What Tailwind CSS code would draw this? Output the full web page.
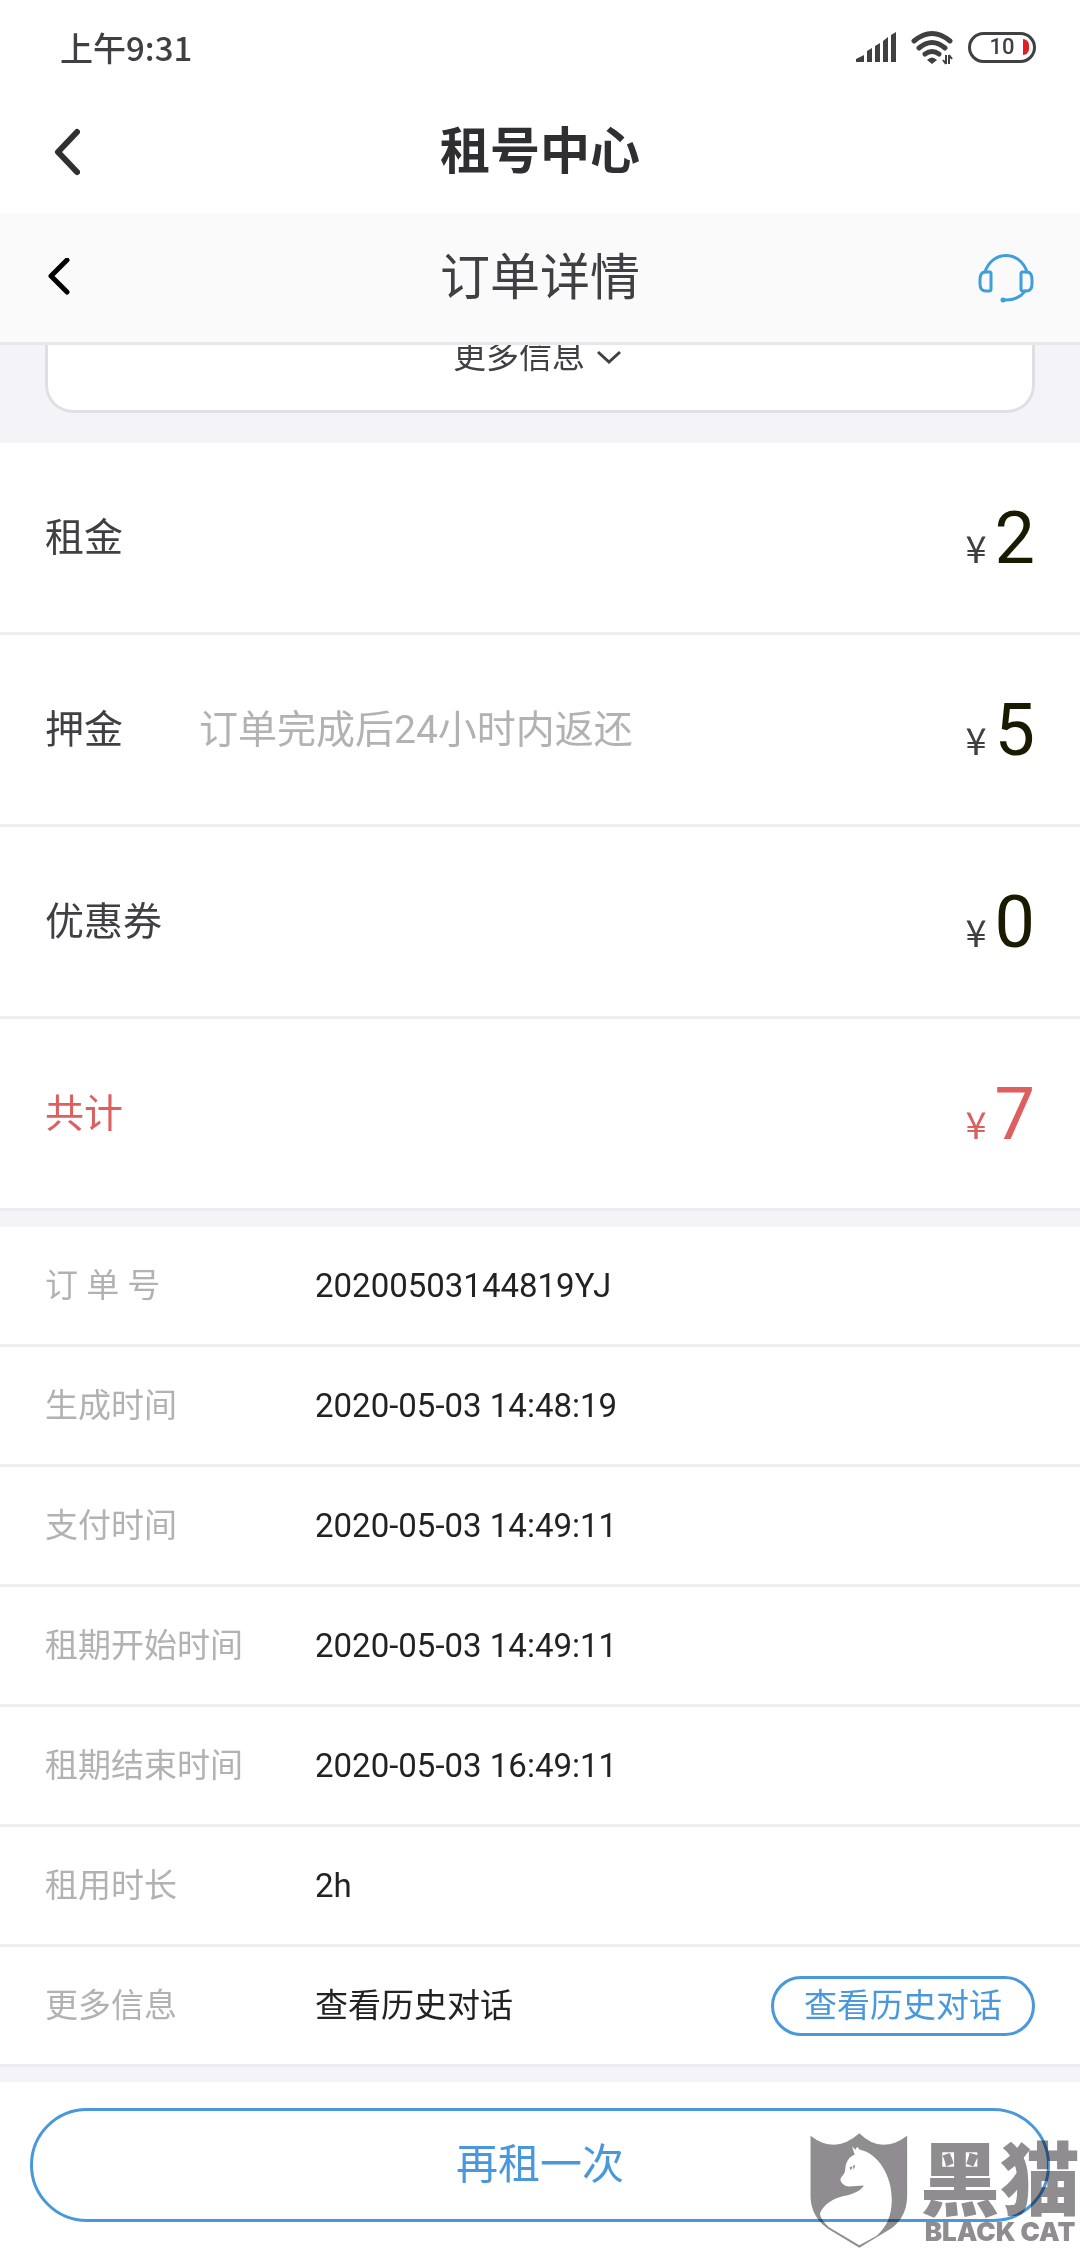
<!DOCTYPE html>
<html lang="zh-CN">

<head>
    <meta charset="UTF-8">
    <meta name="viewport" content="width=device-width, initial-scale=1">
    <title>订单详情</title>
    <script src="https://cdn.jsdelivr.net/npm/@tailwindcss/browser@4"></script>
</head>

<body class="bg-white text-[#404044] font-[Roboto,'Noto_Sans_CJK_SC',sans-serif]">
    <div class="relative flex flex-col min-h-screen overflow-hidden">
        <!-- Status bar -->
        <div class="flex items-center justify-between h-24 pl-15 pr-11 pb-0.5">
            <span class="text-[33px] leading-none font-medium font-['Noto_Sans_CJK_SC',sans-serif]">上午9:31</span>
            <div class="flex items-center gap-3">
                <svg class="w-10 h-8" viewBox="0 0 40 32" fill="#404040">
                    <path d="M0 31v-3l8-4v7zM11 31V20l5-3v14zM19 31V15l5-3v19zM27 31V10l5-4v25zM35 31V4l5-3v30z" />
                </svg>
                <svg class="w-12 h-9" viewBox="-2 0 48 36" fill="none" stroke="#404040" stroke-width="5" stroke-linecap="round">
                    <path d="M4 12Q22-3 40 12M9 19q13-11 26 0M15 25q7-5 14 0" />
                    <path d="M17 31q5-5 10 0l-5 4z" fill="#404040" stroke="none" />
                    <path d="M36 26v9M39 26v9M36 35l-3-4M39 26l3 4" stroke-width="2" stroke-linecap="butt" />
                </svg>
                <span class="relative flex items-center justify-center w-17 h-[31px] rounded-full border-3 border-[#404040] text-[22px] leading-none font-medium">
                    10
                    <i class="absolute right-[4px] w-[6px] h-4 rounded-r-full bg-[#e02020]"></i>
                </span>
            </div>
        </div>

        <!-- App title -->
        <header class="grid grid-cols-[1fr_auto_1fr] items-center h-[117px] px-13 pb-1.5">
            <button type="button" aria-label="返回" class="justify-self-start">
                <svg class="w-7 h-12" viewBox="0 0 28 48" fill="none" stroke="#303030" stroke-width="6" stroke-linecap="round" stroke-linejoin="round">
                    <path d="M25 4 6 24l19 20" />
                </svg>
            </button>
            <h1 class="text-[50px] leading-none font-bold text-[#2e2f31]">租号中心</h1>
        </header>

        <!-- Page title -->
        <header class="grid grid-cols-[1fr_auto_1fr] items-center h-33 px-[46px] bg-[#fafafa] border-b-3 border-[#e7e7e9]">
            <button type="button" aria-label="返回" class="justify-self-start">
                <svg class="w-7 h-10" viewBox="0 0 28 40" fill="none" stroke="#000" stroke-width="5" stroke-linecap="round" stroke-linejoin="round">
                    <path d="M21 2 5 18l16 16" />
                </svg>
            </button>
            <h2 class="text-[50px] leading-none">订单详情</h2>
            <button type="button" aria-label="客服" class="justify-self-end">
                <svg class="w-14 h-13" viewBox="8 7 56 52" fill="none" stroke="#3f9fda" stroke-width="3" stroke-linecap="round" stroke-linejoin="round">
                    <path d="M15 27C22 5 50 5 57 27" />
                    <path d="M15 27h5q1 0 1 2v15q0 2-2 2h-3q-6 0-6-7v-4q0-8 5-8zM57 27h-5q-1 0-1 2v15q0 2 2 2h3q6 0 6-7v-4q0-8-5-8z" />
                    <path d="M55 46q-7 10-22 9" />
                    <circle cx="33" cy="55" r="1" />
                </svg>
            </button>
        </header>

        <main class="bg-[#f3f3f8]">
            <!-- Bottom of the scrolled card -->
            <div class="px-[45px] pb-[30px]">
                <div class="flex items-start justify-center h-17 overflow-hidden bg-white border-3 border-t-0 border-[#e0e0e4] rounded-b-[28px]">
                    <button type="button" class="flex items-center gap-3 -mt-2.5 pr-1.5 text-[33px] leading-11">更多信息
                        <svg class="w-6 h-4" viewBox="0 0 24 16" fill="none" stroke="currentColor" stroke-width="3">
                            <path d="m1 3 11 10L23 3" />
                        </svg>
                    </button>
                </div>
            </div>

            <!-- Fees -->
            <dl class="bg-white text-[39px]">
                <div class="flex items-center justify-between h-48 px-[45px] pt-0.5 border-b-3 border-[#eeeeee]">
                    <dt>租金</dt>
                    <dd class="flex items-baseline gap-2 text-[38px] font-['Noto_Sans_CJK_SC',sans-serif]">¥<span class="text-[72px] leading-none text-[#1a1a00] font-[Roboto,sans-serif]">2</span></dd>
                </div>
                <div class="flex items-center justify-between h-48 px-[45px] pt-0.5 border-b-3 border-[#eeeeee]">
                    <dt>押金<span class="ml-19 text-[#b2b2b2]">订单完成后24小时内返还</span></dt>
                    <dd class="flex items-baseline gap-2 text-[38px] font-['Noto_Sans_CJK_SC',sans-serif]">¥<span class="text-[72px] leading-none text-[#1a1a00] font-[Roboto,sans-serif]">5</span></dd>
                </div>
                <div class="flex items-center justify-between h-48 px-[45px] pt-0.5 border-b-3 border-[#eeeeee]">
                    <dt>优惠券</dt>
                    <dd class="flex items-baseline gap-2 text-[38px] font-['Noto_Sans_CJK_SC',sans-serif]">¥<span class="text-[72px] leading-none text-[#1a1a00] font-[Roboto,sans-serif]">0</span></dd>
                </div>
                <div class="flex items-center justify-between h-48 px-[45px] pt-0.5 border-b-3 border-[#ececf1] text-[#dd5f60]">
                    <dt>共计</dt>
                    <dd class="flex items-baseline gap-2 text-[38px] font-['Noto_Sans_CJK_SC',sans-serif]">¥<span class="text-[72px] leading-none font-[Roboto,sans-serif]">7</span></dd>
                </div>
            </dl>

            <!-- Order info -->
            <dl class="mt-4 bg-white text-[33px] text-[#222222]">
                <div class="flex items-center h-30 px-[45px] border-b-3 border-[#eeeeee]">
                    <dt class="w-[270px] text-[#b2b2b2]">订 单 号</dt>
                    <dd>20200503144819YJ</dd>
                </div>
                <div class="flex items-center h-30 px-[45px] border-b-3 border-[#eeeeee]">
                    <dt class="w-[270px] text-[#b2b2b2]">生成时间</dt>
                    <dd>2020-05-03 14:48:19</dd>
                </div>
                <div class="flex items-center h-30 px-[45px] border-b-3 border-[#eeeeee]">
                    <dt class="w-[270px] text-[#b2b2b2]">支付时间</dt>
                    <dd>2020-05-03 14:49:11</dd>
                </div>
                <div class="flex items-center h-30 px-[45px] border-b-3 border-[#eeeeee]">
                    <dt class="w-[270px] text-[#b2b2b2]">租期开始时间</dt>
                    <dd>2020-05-03 14:49:11</dd>
                </div>
                <div class="flex items-center h-30 px-[45px] border-b-3 border-[#eeeeee]">
                    <dt class="w-[270px] text-[#b2b2b2]">租期结束时间</dt>
                    <dd>2020-05-03 16:49:11</dd>
                </div>
                <div class="flex items-center h-30 px-[45px] border-b-3 border-[#eeeeee]">
                    <dt class="w-[270px] text-[#b2b2b2]">租用时长</dt>
                    <dd>2h</dd>
                </div>
                <div class="flex items-center h-30 px-[45px] border-b-3 border-[#ececf1]">
                    <dt class="w-[270px] text-[#b2b2b2]">更多信息</dt>
                    <dd class="flex flex-1 items-center justify-between">查看历史对话
                        <button type="button" class="h-15 px-[30px] leading-none rounded-full border-3 border-[#4a98dc] text-[#4a98dc]">查看历史对话</button>
                    </dd>
                </div>
            </dl>
        </main>

        <footer class="mt-[15px] px-[30px] py-[26px] bg-white shadow-[0_-15px_0_#f3f3f8]">
            <button type="button" class="w-full h-[114px] rounded-full border-3 border-[#4a98dc] text-[42px] leading-none text-[#4a98dc]">再租一次</button>
        </footer>

        <!-- Watermark -->
        <div class="absolute right-0 bottom-0 flex items-end gap-3 text-[#8f8d8f] mix-blend-multiply pointer-events-none">
            <svg class="w-[98px] h-[115px]" viewBox="33 39 292 344" fill="currentColor">
                <path fill-rule="evenodd" d="M34 47Q68 74 105 74T180 40Q214 74 251 74T323 47V230Q321 292 275 325L180 382 85 325Q36 290 34 230zM158 79 168 89 174 80 180 88C238 100 278 168 277 240 276 290 262 318 232 346L180 375 88 320Q64 298 62 280C72 254 98 236 130 228 164 222 184 212 193 196L148 199Q136 198 132 192 122 184 124 174C132 164 138 158 138 146 139 124 152 108 166 104z" />
                <path d="M151 142q6-6 8 0l-5 9zM160 138l7-4q1 10-6 14 3-5-1-10z" />
            </svg>
            <div class="flex flex-col items-center gap-1">
                <span class="text-[80px] leading-[76px] font-black font-['Noto_Sans_CJK_SC',sans-serif]">黑猫</span>
                <span class="text-[26px] leading-8 font-black font-[Inter,sans-serif]">BLACK CAT</span>
            </div>
        </div>
    </div>
</body>

</html>
